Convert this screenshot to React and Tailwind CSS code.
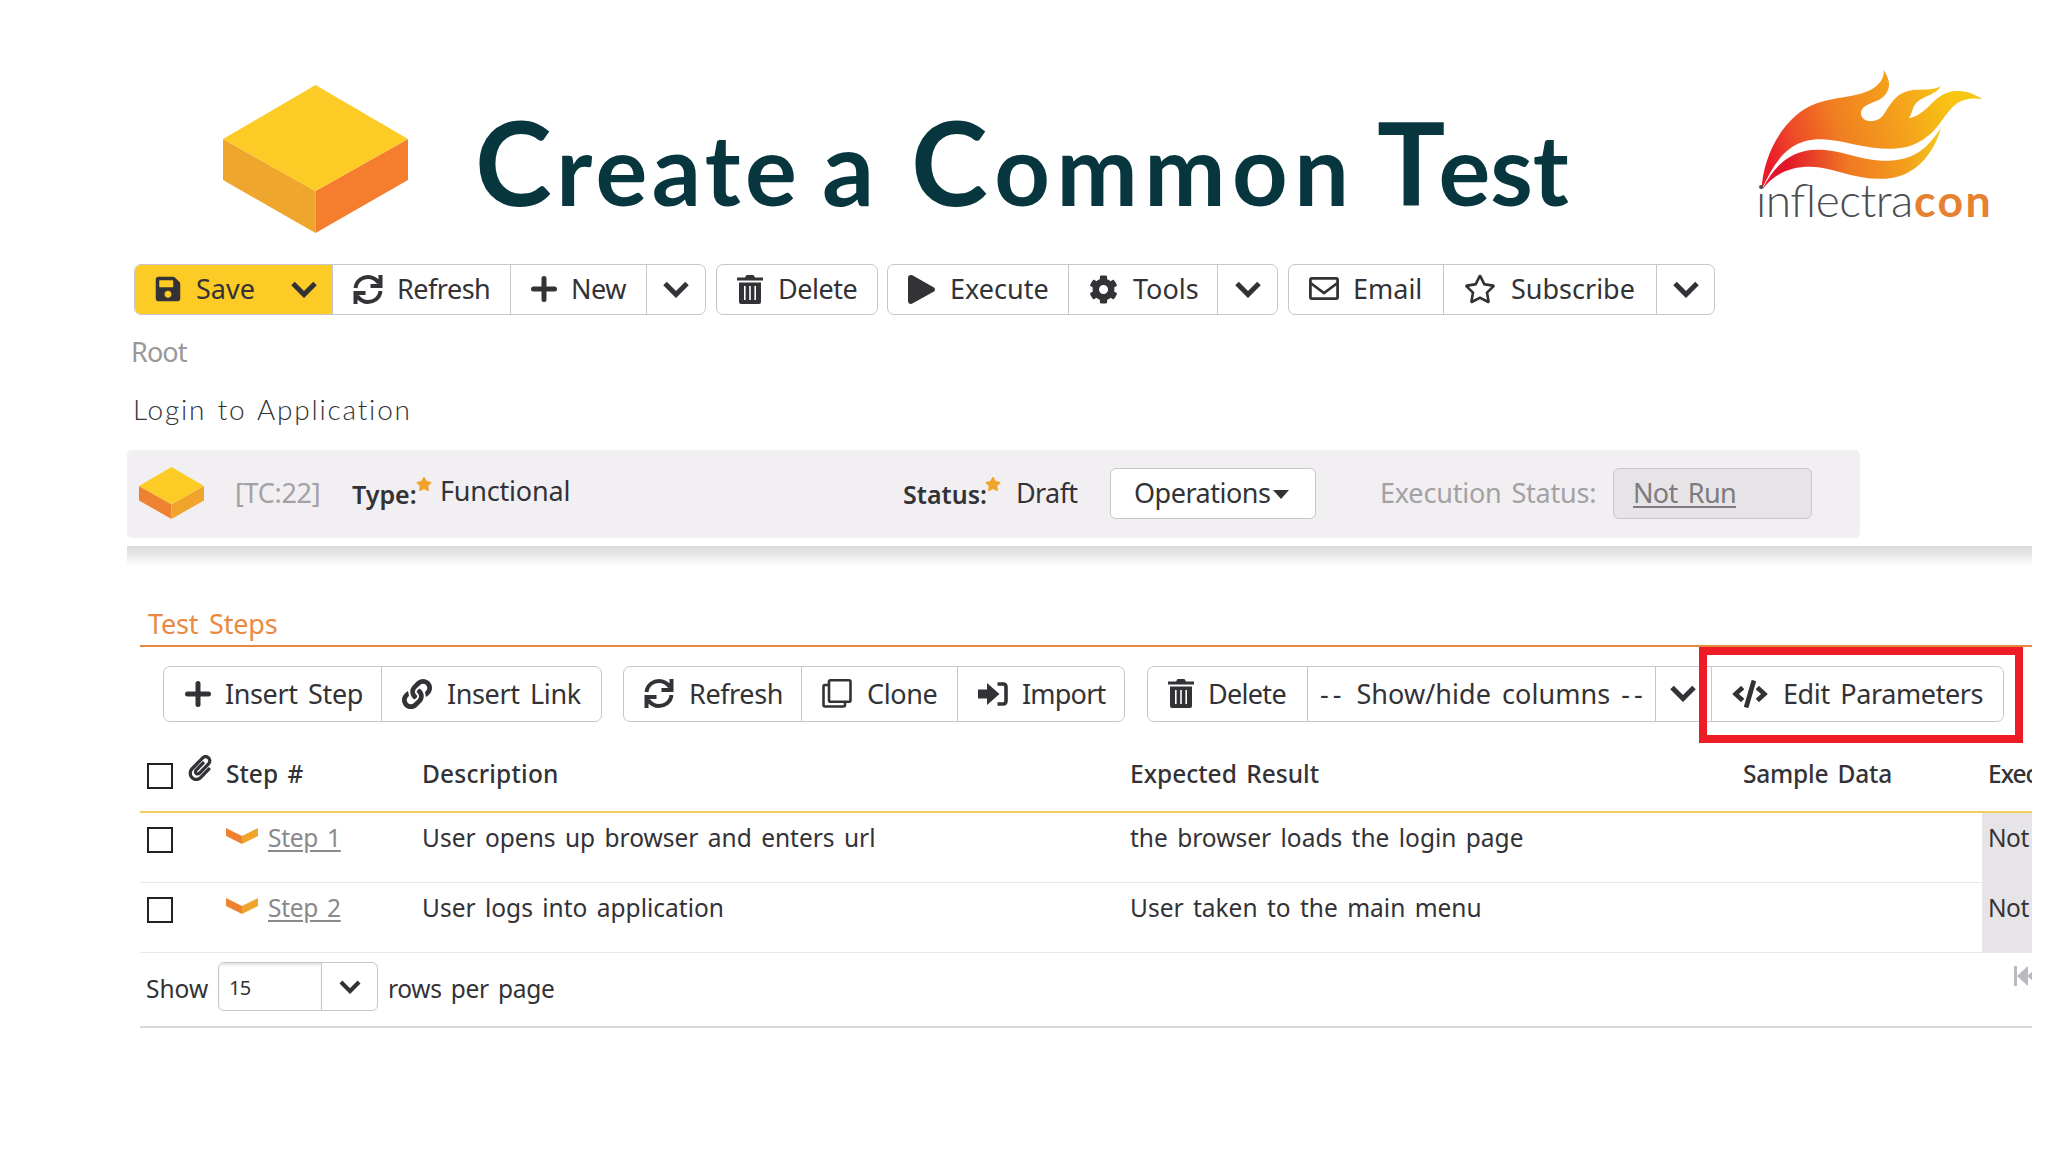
import { clsx } from 'clsx'
import {
  FaCode,
  FaCog,
  FaLink,
  FaPaperclip,
  FaPlay,
  FaRegStar,
  FaSave,
  FaStar,
} from 'react-icons/fa'

function Cube({ className, swap }) {
  const left = swap ? '#ef8231' : '#efa62d'
  const right = swap ? '#f0a42c' : '#f57e2e'
  return (
    <svg viewBox="0 0 184 148" preserveAspectRatio="none" className={className}>
      <path d="M0 54L92 106V148L0 95Z" fill={left} />
      <path d="M184 54L92 106V148L184 95Z" fill={right} />
      <path d="M92 0L184 54L92 106L0 54Z" fill="#fdcb26" />
    </svg>
  )
}

function RefreshIcon() {
  return (
    <svg viewBox="0 0 30 29" className="h-[29px] w-[30px]" fill="none" stroke="currentColor" strokeWidth="4">
      <path d="M2.5 13C3.5 5 10 2 15 2C19.500 2 23 4 26 8M27.500 0V11H17.500" />
      <path d="M27.500 16C26.500 24 20 27 15 27C10.500 27 7 25 4 21M2.500 29V18H12.500" />
    </svg>
  )
}

function PlusIcon() {
  return (
    <svg viewBox="0 0 26 26" className="size-[26px]" stroke="currentColor" strokeWidth="5" strokeLinecap="round">
      <path d="M13 2.500V23.500M2.500 13H23.500" />
    </svg>
  )
}

function TrashIcon() {
  return (
    <svg viewBox="0 0 26 29" className="h-[29px] w-[26px]" fill="currentColor">
      <path d="M0 2.500H8L9.500 0H16.500L18 2.500H26V5.500H0Z" />
      <path
        fillRule="evenodd"
        d="M2 7.500H24V27Q24 29 22 29H4Q2 29 2 27ZM7 11V25H8.600V11ZM12.200 11V25H13.800V11ZM17.400 11V25H19V11Z"
      />
    </svg>
  )
}

function ChevronIcon({ className = 'h-[17px] w-[26px]' }) {
  return (
    <svg viewBox="0 0 26 17" className={className} fill="none" stroke="currentColor" strokeWidth="5">
      <path d="M2 2.500L13 13.500L24 2.500" />
    </svg>
  )
}

function MailIcon() {
  return (
    <svg viewBox="0 0 30 23" className="mb-[2px] h-[23px] w-[30px]" fill="none" stroke="currentColor" strokeWidth="2.800">
      <rect x="1.400" y="1.400" width="27.200" height="20.200" rx="1.500" />
      <path d="M1.500 6L15 16L28.500 6" />
    </svg>
  )
}

function CloneIcon() {
  return (
    <svg viewBox="0 0 30 29" className="h-[29px] w-[30px]" fill="none" stroke="currentColor" strokeWidth="2.600">
      <rect x="7" y="1.300" width="21.500" height="21.500" rx="1.500" />
      <path d="M6.500 6H3Q1.500 6 1.500 7.500V26Q1.500 27.500 3 27.500H21.500Q23 27.500 23 26V23" />
    </svg>
  )
}

function ImportIcon() {
  return (
    <svg viewBox="0 0 30 24" className="h-[24px] w-[30px]" fill="currentColor">
      <path d="M0 7.500H9V1L21.500 12L9 23V16.500H0Z" />
      <path d="M19.500 2H25Q28 2 28 5V19Q28 22 25 22H19.500" fill="none" stroke="currentColor" strokeWidth="3.600" />
    </svg>
  )
}

function StepIcon() {
  return (
    <svg viewBox="0 0 32 16" className="h-[16px] w-[32px]">
      <path d="M0 0L16 8V16L0 8Z" fill="#ef8231" />
      <path d="M32 0L16 8V16L32 8Z" fill="#f0a42c" />
    </svg>
  )
}

function Logo() {
  return (
    <svg viewBox="0 0 984 600" className="absolute top-[50px] left-[1720px] h-[200px] w-[328px]">
      <defs>
        <linearGradient id="flame" gradientUnits="userSpaceOnUse" x1="150" y1="330" x2="700" y2="170">
          <stop offset="0" stopColor="#ea1c2c" />
          <stop offset="0.150" stopColor="#ee4a28" />
          <stop offset="0.400" stopColor="#f08020" />
          <stop offset="0.750" stopColor="#f5a51b" />
          <stop offset="1" stopColor="#f8c512" />
        </linearGradient>
        <linearGradient id="tail" gradientUnits="userSpaceOnUse" x1="200" y1="330" x2="660" y2="290">
          <stop offset="0" stopColor="#e2162a" />
          <stop offset="0.400" stopColor="#f07a22" />
          <stop offset="0.750" stopColor="#f39c1c" />
          <stop offset="1" stopColor="#f0c81c" />
        </linearGradient>
      </defs>
      <path
        fill="url(#flame)"
        d="M125 418C128 320 190 195 290 160C360 136 430 142 470 107C487 92 493 78 490 60C514 92 512 120 490 140C465 162 422 160 423 192C428 222 475 218 490 195C512 165 525 122 590 119C620 118 645 120 662 107C650 135 605 138 588 160C575 175 578 190 566 205C630 192 640 125 710 123C745 122 765 135 787 147C750 142 720 148 697 172C660 212 650 250 590 280C540 305 470 298 400 283C330 266 270 256 215 292C175 320 150 365 125 418Z"
      />
      <path
        fill="url(#tail)"
        d="M127 418C160 350 210 300 290 299C370 298 420 335 510 332C590 328 625 290 662 235C650 290 600 370 520 383C420 400 350 351 270 350C210 350 165 370 127 418Z"
      />
      <text x="108" y="500" textLength="472" fontSize="138" className="fill-[#4b4b50] font-['Lato'] font-light">
        inflectra
      </text>
      <text x="582" y="500" textLength="230" fontSize="134" className="fill-[#e5812f] font-['Lato'] font-bold">
        con
      </text>
    </svg>
  )
}

function Group({ className, children }) {
  return (
    <div className={clsx('flex h-full overflow-hidden rounded-[7px] border border-[#c8c5cb] bg-white', className)}>
      {children}
    </div>
  )
}

function Button({ className, icon, gap = 'gap-[15px]', children }) {
  return (
    <button
      className={clsx(
        'flex h-full shrink-0 items-center border-r border-[#c8c5cb] pb-px whitespace-nowrap last:border-r-0',
        gap,
        className,
      )}
    >
      {icon}
      {children && <span className="[word-spacing:4px]">{children}</span>}
    </button>
  )
}

function Checkbox() {
  return <span className="block h-[26px] w-[26px] border-2 border-[#222] bg-white" />
}

const columns = 'grid grid-cols-[47px_39px_196px_708px_613px_239px_50px]'

const steps = [
  { name: 'Step 1', description: 'User opens up browser and enters url', result: 'the browser loads the login page' },
  { name: 'Step 2', description: 'User logs into application', result: 'User taken to the main menu' },
]

function Header() {
  return (
    <header className="relative flex h-[264px]">
      <Cube className="mt-[85px] ml-[223px] h-[148px] w-[185px]" />
      <h1 className="mt-[112px] ml-[67px] flex items-baseline font-['Lato'] text-[97px] leading-[100px] font-bold whitespace-nowrap text-[#08363f]">
        <span className="w-[344px] tracking-[4.500px]">
          <span className="text-[116px]">C</span>reate
        </span>
        <span className="w-[92px] pl-[3px] text-[103px]">a</span>
        <span className="w-[466px] tracking-[6.500px]">
          <span className="text-[116px]">C</span>ommon
        </span>
        <span>
          <span className="text-[114px] tracking-[-7px]">T</span>est
        </span>
      </h1>
      <Logo />
    </header>
  )
}

function MainToolbar() {
  return (
    <div className="ml-[134px] flex h-[51px]">
      <Group className="w-[572px]">
        <Button className="w-[141px] bg-[#fdcb26] pl-[19px]" icon={<FaSave className="size-[28px]" />} gap="gap-[14px]">
          Save
        </Button>
        <Button className="w-[57px] justify-center bg-[#fdcb26]" icon={<ChevronIcon />} />
        <Button className="w-[178px] pl-[20px] tracking-[-0.500px]" icon={<RefreshIcon />} gap="gap-[14px]">
          Refresh
        </Button>
        <Button className="w-[136px] pl-[20px] tracking-[-0.500px]" icon={<PlusIcon />} gap="gap-[14px]">
          New
        </Button>
        <Button className="w-[58px] justify-center" icon={<ChevronIcon />} />
      </Group>
      <Group className="ml-[10px] w-[162px]">
        <Button className="pl-[20px] tracking-[-0.500px]" icon={<TrashIcon />}>
          Delete
        </Button>
      </Group>
      <Group className="ml-[9px] w-[391px]">
        <Button
          className="w-[181px] pl-[20px]"
          icon={<FaPlay className="h-[29px] w-[27px]" preserveAspectRatio="none" />}
        >
          Execute
        </Button>
        <Button className="w-[149px] pl-[20px]" icon={<FaCog className="size-[29px]" />}>
          Tools
        </Button>
        <Button className="w-[59px] justify-center" icon={<ChevronIcon />} />
      </Group>
      <Group className="ml-[10px] w-[427px]">
        <Button className="w-[155px] pl-[20px]" icon={<MailIcon />} gap="gap-[14px]">
          Email
        </Button>
        <Button className="w-[213px] pl-[20px]" icon={<FaRegStar className="h-[30px] w-[32px]" />}>
          Subscribe
        </Button>
        <Button className="w-[57px] justify-center" icon={<ChevronIcon />} />
      </Group>
    </div>
  )
}

function StatusBar() {
  return (
    <div className="ml-[127px] flex h-[88px] w-[1733px] items-center rounded-[5px] bg-[#f1eff1] pb-[2px] whitespace-nowrap">
      <Cube swap className="ml-[12px] h-[52px] w-[65px] shrink-0" />
      <span className="ml-[31px] w-[117px] tracking-[-0.300px] text-[#a3a1a4]">[TC:22]</span>
      <span className="relative top-[1px] w-[64px] text-[25px] font-semibold">Type:</span>
      <FaStar className="mb-[18px] size-[16px] text-[#f0a42c]" />
      <span className="relative -top-[2px] ml-[8px] w-[463px] tracking-[-0.200px]">Functional</span>
      <span className="relative top-[1px] w-[82px] text-[25px] font-semibold">Status:</span>
      <FaStar className="mb-[18px] size-[16px] text-[#f0a42c]" />
      <span className="ml-[15px] w-[94px] tracking-[-0.600px]">Draft</span>
      <button className="flex h-[51px] w-[206px] items-center rounded-[6px] border border-[#c8c5cb] bg-white pl-[23px] tracking-[-0.500px]">
        Operations
        <span className="mt-[3px] ml-[3px] border-x-8 border-t-9 border-x-transparent border-t-[#333]" />
      </button>
      <span className="ml-[64px] w-[233px] tracking-[-0.200px] text-[#a3a1a4] [word-spacing:3px]">Execution Status:</span>
      <span className="flex h-[51px] w-[199px] items-center rounded-[6px] border border-[#c8c5cb] bg-[#e6e4e6] pl-[19px] tracking-[-0.700px] text-[#7d7b7e] underline underline-offset-3 [word-spacing:4px]">
        Not Run
      </span>
    </div>
  )
}

function StepsToolbar() {
  return (
    <div className="relative mt-[19px] ml-[163px] flex h-[56px] tracking-[-0.400px]">
      <Group className="w-[439px]">
        <Button className="w-[218px] pl-[21px]" icon={<PlusIcon />} gap="gap-[14px]">
          Insert Step
        </Button>
        <Button className="pl-[20px]" icon={<FaLink className="size-[30px]" />}>
          Insert Link
        </Button>
      </Group>
      <Group className="ml-[21px] w-[502px]">
        <Button className="w-[178px] pl-[20px]" icon={<RefreshIcon />}>
          Refresh
        </Button>
        <Button className="w-[156px] pl-[20px]" icon={<CloneIcon />}>
          Clone
        </Button>
        <Button className="pl-[20px] tracking-[-0.800px]" icon={<ImportIcon />} gap="gap-[14px]">
          Import
        </Button>
      </Group>
      <Group className="ml-[22px] w-[857px]">
        <Button className="w-[160px] pl-[20px] tracking-[-0.700px]" icon={<TrashIcon />} gap="gap-[14px]">
          Delete
        </Button>
        <Button className="w-[348px] pl-[12px] tracking-[0.050px]">
          <span className="tracking-[4px]">--</span> Show/hide columns <span className="tracking-[4px]">--</span>
        </Button>
        <Button className="w-[56px] pl-[14px]" icon={<ChevronIcon />} />
        <Button className="pl-[20px]" icon={<FaCode className="h-[28px] w-[36px]" />}>
          Edit Parameters
        </Button>
      </Group>
      {/* highlight around the Edit Parameters button */}
      <div className="absolute -top-[19px] left-[1536px] h-[96px] w-[324px] border-8 border-[#ee1c25]" />
    </div>
  )
}

function StepsTable() {
  return (
    <div className="ml-[140px] w-[1892px] overflow-hidden text-[24.500px] whitespace-nowrap [word-spacing:3px]">
      <div className={clsx(columns, 'h-[91px] border-b-2 border-[#f2cd5c] font-medium')}>
        <span className="pt-[41px] pl-[7px]">
          <Checkbox />
        </span>
        <FaPaperclip className="mt-[33px] size-[26px]" />
        <span className="mt-[34px]">Step #</span>
        <span className="mt-[34px] tracking-[0.200px]">Description</span>
        <span className="mt-[34px]">Expected Result</span>
        <span className="mt-[34px] tracking-[-0.200px]">Sample Data</span>
        <span className="mt-[34px] ml-[6px] tracking-[-1px]">Exec</span>
      </div>
      {steps.map((step) => (
        <div key={step.name} className={clsx(columns, 'h-[70px] border-b border-[#e9e7ea]')}>
          <span className="pt-[14px] pl-[7px]">
            <Checkbox />
          </span>
          <span />
          <span className="flex gap-[10px] pt-[7px]">
            <span className="pt-[8px]">
              <StepIcon />
            </span>
            <a className="tracking-[-0.300px] text-[#8a888b] underline underline-offset-3">{step.name}</a>
          </span>
          <span className="pt-[7px]">{step.description}</span>
          <span className="pt-[7px]">{step.result}</span>
          <span />
          <span className="bg-[#e6e4e6] pt-[7px] pl-[6px] tracking-[-0.500px]">Not</span>
        </div>
      ))}
      <div className="relative flex h-[75px] items-center border-b-2 border-[#dad8dc] pb-[2px] pl-[6px]">
        <span className="w-[72px]">Show</span>
        <div className="mb-[4px] flex h-[49px] w-[160px] overflow-hidden rounded-[6px] border border-[#c8c5cb]">
          <span className="flex w-[103px] items-center border-r border-[#c8c5cb] pt-[2px] pl-[10px] text-[20px] tracking-[-0.800px] shadow-[inset_0_3px_3px_-1px_#e2e0e4]">
            15
          </span>
          <span className="flex flex-1 items-center justify-center">
            <ChevronIcon className="h-[14px] w-[22px]" />
          </span>
        </div>
        <span className="ml-[10px] tracking-[-0.300px]">rows per page</span>
        <svg viewBox="0 0 32 20" className="absolute top-[13px] left-[1874px] h-[20px] w-[32px]" fill="#bbb9bd">
          <path d="M0 0H3V20H0ZM3 10L14 0V20ZM13 10L25 0V20Z" />
        </svg>
      </div>
    </div>
  )
}

export default function App() {
  return (
    <div className="h-[1152px] w-[2048px] overflow-hidden bg-white font-['Noto_Sans',sans-serif] text-[27px] leading-[36px] text-[#333236]">
      <Header />
      <MainToolbar />
      <p className="mt-[19px] ml-[131px] tracking-[-0.900px] text-[#99979a]">Root</p>
      <p className="mt-[21px] mb-[20px] ml-[133px] h-[39px] font-['Lato'] text-[28px] font-light tracking-[1.800px] [word-spacing:2px]">
        Login to Application
      </p>
      <StatusBar />
      <div className="mt-[8px] ml-[127px] h-[20px] w-[1905px] bg-linear-to-b from-[#dcdadd] via-[#e6e5e7] via-40% to-white" />
      <h2 className="mt-[40px] ml-[140px] h-[41px] w-[1892px] border-b-2 border-[#e5893f] pl-[8px] tracking-[-0.200px] text-[#ea8a42] [word-spacing:4px]">
        Test Steps
      </h2>
      <StepsToolbar />
      <StepsTable />
    </div>
  )
}
